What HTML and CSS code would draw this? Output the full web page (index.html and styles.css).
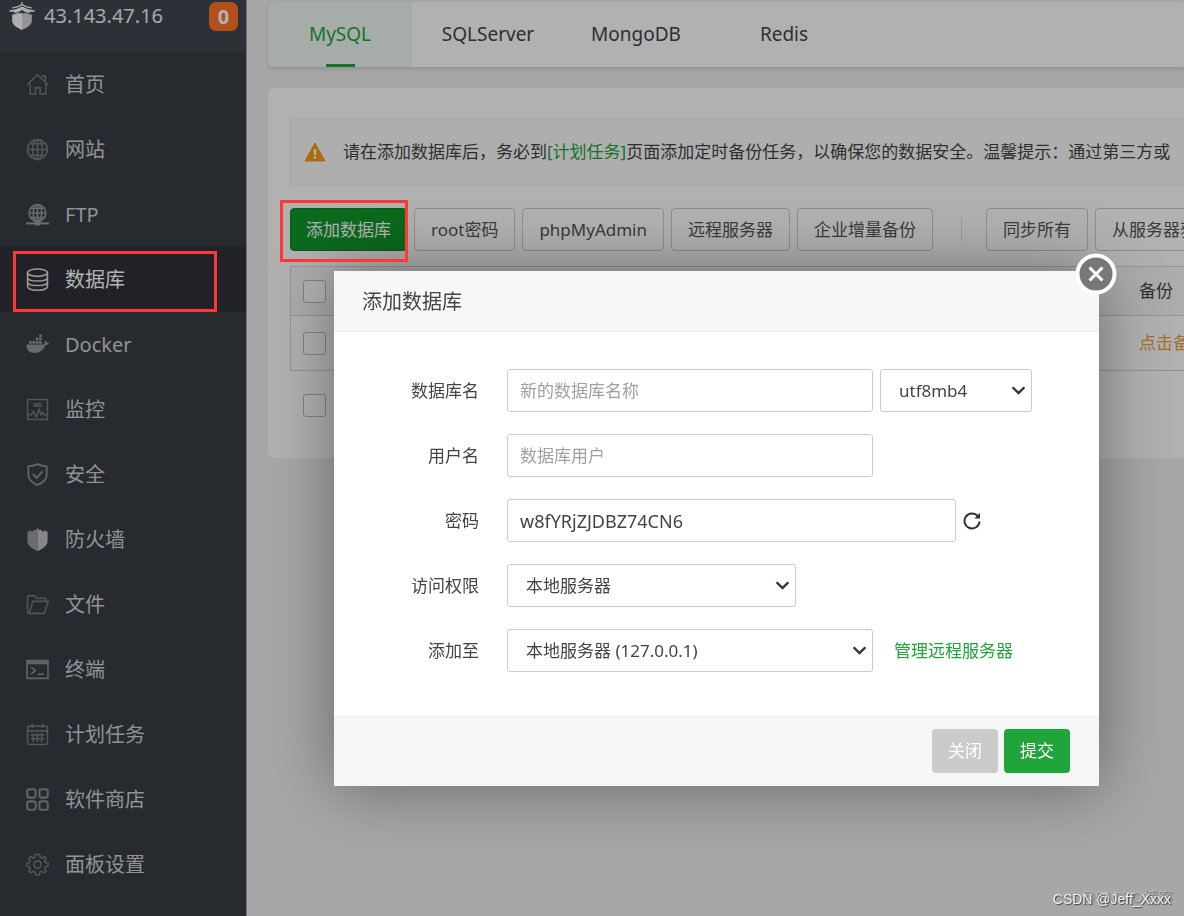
FILE: index.html
```html
<!DOCTYPE html>
<html lang="zh-CN">
<head>
<meta charset="utf-8">
<meta name="viewport" content="width=device-width, initial-scale=1">
<title>数据库</title>
<link rel="stylesheet" href="styles.css">
</head>
<body>
<div class="app">
  <aside class="sidebar">
    <header class="host">
      <svg class="host-logo" width="26" height="28" viewBox="0 0 26 28" fill="currentColor"><path d="M12.400 0h1.200v2c2.600 1.800 5.600 2.800 9.400 3.400v1.200c-4-.4-7.300-1.500-10-3.300-2.700 1.800-6 2.900-10 3.300V5.400c3.800-.6 6.800-1.600 9.400-3.400z"/><path d="M.5 8.300C5.500 7.800 9.800 6.600 13 4.600c3.200 2 7.500 3.200 12.500 3.700v1.500h-4.300l-1 1.100c-2.800-.3-5.200-1.400-7.200-2.900-2 1.500-4.400 2.600-7.200 2.900l-1-1.100H.5z"/><path d="M3.200 12l2 1v-1.500l2 .8v-1.500l2 .6 1.800-1.200V12L13 10.600V28C7.500 25.500 3.200 22.500 3.200 19z"/><path d="M22.800 12l-2 1v-1.500l-2 .8v-1.500l-2 .6-1.800-1.200V12l-2-1.400V28c5.500-2.500 9.800-5.500 9.800-9z" opacity=".8"/></svg>
      <span class="host-ip">43.143.47.16</span>
      <span class="host-badge">0</span>
    </header>
    <nav class="menu">
      <a class="menu-item" href="#"><svg class="menu-icon" viewBox="0 0 22 22"><path d="M1 11.500 11 1.500l10 10M4 10v10h5v-6h4.500v6H19V10M15 3h3.500v5"/></svg>首页</a>
      <a class="menu-item" href="#"><svg class="menu-icon" viewBox="0 0 22 22"><circle cx="11" cy="11" r="9.500"/><ellipse cx="11" cy="11" rx="4.800" ry="9.500"/><path d="M11 1.500v19M1.500 11h19M3.500 5.500h15M3.500 16.500h15"/></svg>网站</a>
      <a class="menu-item" href="#"><svg class="menu-icon bright" viewBox="0 0 22 22"><circle cx="11" cy="9.500" r="8"/><ellipse cx="11" cy="9.500" rx="4" ry="8"/><path d="M11 1.500v16M3 9.500h16M4.500 5h13M4.500 14h13"/><path d="M0 19.500h22" stroke-width="2"/><path d="M8.500 19.500h5" stroke-width="4"/></svg>FTP</a>
      <a class="menu-item active" href="#"><svg class="menu-icon" viewBox="0 0 22 22"><ellipse cx="11" cy="4.500" rx="9.500" ry="3.500"/><path d="M1.500 4.500v13c0 5 19 5 19 0v-13M1.500 9c0 4.600 19 4.600 19 0M1.500 13.300c0 4.600 19 4.600 19 0"/></svg>数据库</a>
      <a class="menu-item" href="#"><svg class="menu-icon solid" viewBox="0 0 22 22"><path d="M.5 11h16c1 0 1.600-1 1.300-2.600l.8-1.200c.8.600 1.200 1.300 1.200 2 .8-.2 1.700 0 2.200.4-.6 1.300-1.800 1.900-3.500 1.800C16.900 16.200 13.500 19 8 19 3 19 .3 16.500.5 11zM3 7.700h2.500v2.500H3zM6.200 7.700h2.500v2.500H6.200zM9.400 7.700h2.500v2.500H9.400zM12.600 7.700h2.500v2.500h-2.500zM9.400 4.600h2.500v2.400H9.400zM12.600 4.600h2.500v2.400h-2.500zM12.600 1.500h2.500v2.400h-2.500z"/></svg>Docker</a>
      <a class="menu-item" href="#"><svg class="menu-icon" viewBox="0 0 22 22"><path d="M1.500 1.500h19v19h-19zM7 5.500h8M7 7.500h8M2 16h3l2-3 3 5 2.500-7 2 5 1.500-2 1.500 2H20"/></svg>监控</a>
      <a class="menu-item" href="#"><svg class="menu-icon medium" viewBox="0 0 22 24"><path d="M11 1.200c3 1.600 6 2.300 9.500 2.300V13c0 4.500-4 7.500-9.500 10C5.500 20.500 1.500 17.500 1.500 13V3.500C5 3.500 8 2.800 11 1.200zM6 11.500l4 4 6.500-7" stroke-width="2"/></svg>安全</a>
      <a class="menu-item" href="#"><svg class="menu-icon solid light" viewBox="0 0 22 24"><path d="M11 0v24C5 21.500.5 18 .5 14V3.500l2 .5V2.500h2V4l2-.6V2h2v.6z" opacity=".7"/><path d="M11 0v24c6-2.500 10.500-6 10.500-10V3.500l-2 .5V2.500h-2V4l-2-.6V2h-2v.6z"/></svg>防火墙</a>
      <a class="menu-item" href="#"><svg class="menu-icon" viewBox="0 0 22 22"><path d="M3 19.500C2 19.500 1.500 19 1.500 18V4c0-1 .5-1.500 1.500-1.500h5L10 5h7.500c1 0 1.500.5 1.500 1.500V8M3 19.500h14.500L21.200 8H6.500z"/></svg>文件</a>
      <a class="menu-item" href="#"><svg class="menu-icon medium" viewBox="0 0 22 22"><path d="M1 2.500h20v17H1z"/><path d="M1 4.500h20" stroke-width="3"/><path d="M5 9l4 3-4 3.500M11 15.500h6"/></svg>终端</a>
      <a class="menu-item" href="#"><svg class="menu-icon" viewBox="0 0 22 22"><rect x="1.500" y="3" width="19" height="17.500" rx="2"/><path d="M1.500 7.500h19M6 .8v4M16 .8v4M4.500 11.500h13M4.500 15h13M7 9.500v9M11 9.500v9M15 9.500v9"/></svg>计划任务</a>
      <a class="menu-item" href="#"><svg class="menu-icon medium" viewBox="0 0 22 22"><g stroke-width="2"><rect x="1.200" y="1.200" width="8" height="8" rx="2"/><rect x="12.800" y="1.200" width="8" height="8" rx="2"/><rect x="1.200" y="12.800" width="8" height="8" rx="2"/><rect x="12.800" y="12.800" width="8" height="8" rx="2"/></g></svg>软件商店</a>
      <a class="menu-item" href="#"><svg class="menu-icon" viewBox="0 0 22 22"><circle cx="11" cy="11" r="3.500"/><path d="M9 1.500h4l.6 2.600 1.700.7L17.600 3.400l1.600 1.700-1.200 2.400.7 1.600 2.300.5v3l-2.300.6-.7 1.600 1.200 2.300-1.800 1.800-2.300-1.300-1.600.7-.6 2.500H9.200l-.6-2.500-1.700-.7-2.300 1.300-1.800-1.800 1.200-2.300-.7-1.600-2.300-.6v-3l2.300-.5.7-1.600-1.200-2.400 1.700-1.700 2.300 1.400 1.700-.7z"/></svg>面板设置</a>
    </nav>
  </aside>

  <main class="main">
    <nav class="tabs">
      <a class="tab current" href="#">MySQL</a>
      <a class="tab" href="#">SQLServer</a>
      <a class="tab" href="#">MongoDB</a>
      <a class="tab" href="#">Redis</a>
    </nav>
    <section class="panel">
      <div class="notice">
        <svg class="notice-icon" width="22" height="20" viewBox="0 0 22 20"><path d="M11 1 21 19H1z" fill="#f79a13" stroke="#f79a13" stroke-linejoin="round"/><path d="M11 7v6M11 14.500v2.300" stroke="#fff" stroke-width="2.400"/></svg>
        <p class="notice-text">请在添加数据库后，务必到<a class="notice-link" href="#">[计划任务]</a>页面添加定时备份任务，以确保您的数据安全。温馨提示：通过第三方或</p>
      </div>
      <div class="toolbar">
        <button class="tool primary" type="button">添加数据库</button>
        <button class="tool" type="button">root密码</button>
        <button class="tool" type="button">phpMyAdmin</button>
        <button class="tool" type="button">远程服务器</button>
        <button class="tool" type="button">企业增量备份</button>
        <span class="divider"></span>
        <button class="tool" type="button">同步所有</button>
        <button class="tool" type="button">从服务器获取</button>
      </div>
      <table class="table">
        <thead><tr><th class="col-check"><input class="check" type="checkbox" aria-label="全选"></th><th class="col-info"></th><th class="col-backup">备份</th></tr></thead>
        <tbody><tr><td class="col-check"><input class="check" type="checkbox" aria-label="选择"></td><td class="col-info"></td><td class="col-backup"><a class="backup-link" href="#">点击备份</a></td></tr></tbody>
      </table>
      <div class="batch"><input class="check" type="checkbox" aria-label="批量选择"></div>
    </section>
  </main>
</div>

<div class="shade"></div>

<form class="dialog" role="dialog" aria-labelledby="dialog-title">
  <button class="dialog-close" type="button" aria-label="关闭窗口"><svg width="42" height="42" viewBox="0 0 42 42"><circle cx="21" cy="21" r="18.500" fill="#787878" stroke="#fff" stroke-width="4"/><path d="M14.500 14.500l13 13M27.500 14.500l-13 13" stroke="#fff" stroke-width="3"/></svg></button>
  <h2 class="dialog-title" id="dialog-title">添加数据库</h2>
  <div class="dialog-body">
    <div class="row">
      <label class="label" for="db-name">数据库名</label>
      <input class="field medium-field" id="db-name" type="text" placeholder="新的数据库名称">
      <span class="select charset"><select class="field" aria-label="字符集"><option>utf8mb4</option></select><svg class="arrow" viewBox="0 0 14 10"><path d="M1.500 2 7 7.500 12.500 2"/></svg></span>
    </div>
    <div class="row">
      <label class="label" for="db-user">用户名</label>
      <input class="field medium-field" id="db-user" type="text" placeholder="数据库用户">
    </div>
    <div class="row">
      <label class="label" for="db-pass">密码</label>
      <input class="field long-field" id="db-pass" type="text" value="w8fYRjZJDBZ74CN6">
      <button class="refresh" type="button" aria-label="随机密码"><svg width="18" height="18" viewBox="0 0 18 18"><path d="M14.800 4.200A7.500 7.500 0 1 0 16.500 9.500" fill="none" stroke="#333" stroke-width="2"/><path d="M17 .8v5.700h-5.700z" fill="#333"/></svg></button>
    </div>
    <div class="row">
      <label class="label" for="db-access">访问权限</label>
      <span class="select access"><select class="field" id="db-access"><option>本地服务器</option></select><svg class="arrow" viewBox="0 0 14 10"><path d="M1.500 2 7 7.500 12.500 2"/></svg></span>
    </div>
    <div class="row">
      <label class="label" for="db-server">添加至</label>
      <span class="select medium-field"><select class="field" id="db-server"><option>本地服务器 (127.0.0.1)</option></select><svg class="arrow" viewBox="0 0 14 10"><path d="M1.500 2 7 7.500 12.500 2"/></svg></span>
      <a class="manage" href="#">管理远程服务器</a>
    </div>
  </div>
  <footer class="dialog-footer">
    <button class="action cancel" type="button">关闭</button>
    <button class="action submit" type="submit">提交</button>
  </footer>
</form>

<div class="mark mark-menu"></div>
<div class="mark mark-add"></div>
<span class="watermark site">@51CTO博客</span>
<span class="watermark author">CSDN @Jeff_Xxxx</span>
</body>
</html>
```
FILE: styles.css
```css
* { box-sizing: border-box; }

body {
  margin: 0;
  min-height: 100vh;
  overflow: hidden;
  background: #f0f0f0;
  color: #444;
  font-family: "Noto Sans", "Noto Sans CJK SC", sans-serif;
  font-size: 17px;
  line-height: 24px;
}

a { color: inherit; text-decoration: none; }
button, input, select { font: inherit; color: inherit; margin: 0; }

.app { display: flex; min-height: 100vh; }

/* sidebar */
.sidebar {
  flex: none;
  width: 247px;
  background: #383e46;
  border-right: 1px solid #a5a7aa;
  color: #d0d1d3;
  font-size: 20px;
}
.host {
  display: flex;
  align-items: flex-start;
  height: 52px;
  padding: 2px 8px 0 9px;
  background: #40464f;
}
.host-logo { color: #fafafa; }
.host-ip { margin-left: 9px; line-height: 28px; color: #f0f0f0; }
.host-badge {
  width: 29px;
  margin-left: auto;
  border-radius: 7px;
  background: #ff7128;
  color: #fff;
  font-weight: 700;
  line-height: 29px;
  text-align: center;
}
.menu-item {
  display: flex;
  align-items: center;
  gap: 16px;
  height: 65px;
  padding-left: 26px;
}
.menu-item.active { background: #2e3238; color: #fff; }
.menu-icon {
  width: 23px;
  height: 23px;
  fill: none;
  stroke: #747a80;
  stroke-width: 1.5;
}
.menu-icon.medium { stroke: #8b8f93; }
.menu-icon.bright { stroke: #979a9d; }
.menu-icon.solid { fill: #95989b; stroke: none; }
.menu-icon.light { fill: #c0c2c4; }
.active .menu-icon { stroke: #e0e0e0; }

/* content */
.main { flex: 1; min-width: 0; padding: 2px 0 0 21px; }
.tabs {
  display: flex;
  gap: 4px;
  height: 65px;
  border-radius: 6px 0 0 6px;
  overflow: hidden;
  background: #fefefe;
  box-shadow: 0 2px 5px rgba(0, 0, 0, .15);
  font-size: 19px;
}
.tab {
  position: relative;
  width: 144px;
  line-height: 64px;
  text-align: center;
}
.tab.current { background: #eef7f1; color: #20a53a; }
.tab.current::after {
  content: "";
  position: absolute;
  left: 58px;
  bottom: 0;
  width: 29px;
  height: 3px;
  background: #20a53a;
}
.panel {
  height: 370px;
  margin-top: 21px;
  padding: 30px 0 0 22px;
  border-radius: 6px 0 0 6px;
  background: #fefefe;
}
.notice {
  display: flex;
  align-items: center;
  height: 68px;
  padding-left: 13px;
  border: 1px solid #efefef;
  border-right: 0;
  border-radius: 3px 0 0 3px;
  background: #fafafa;
  overflow: hidden;
  white-space: nowrap;
}
.notice-icon { flex: none; margin-right: 17px; }
.notice-text { margin: 0; }
.notice-link { color: #20a53a; }
.toolbar {
  display: flex;
  gap: 7px;
  margin-top: 22px;
  overflow: hidden;
}
.tool {
  flex: none;
  height: 43px;
  padding: 0 16px;
  border: 1px solid #ccc;
  border-radius: 4px;
  background: #fff;
  color: #555;
  white-space: nowrap;
}
.tool.primary { padding: 0 15px; border-color: #0f8527; background: #10992a; color: #fff; }
.divider {
  flex: none;
  width: 1px;
  height: 24px;
  margin: 9px 17px 0 21px;
  background: #ddd;
}
.table {
  width: 100%;
  margin-top: 15px;
  border-collapse: collapse;
  border: 1px solid #d5d5d5;
  border-right: 0;
  table-layout: fixed;
}
.table th { height: 49px; background: #f6f6f6; font-weight: 400; }
.table td { height: 55px; border-top: 1px solid #d5d5d5; }
.table th, .table td { padding: 0; text-align: left; white-space: nowrap; overflow: hidden; }
.table .col-check { width: 44px; padding-left: 12px; }
.table .col-backup { width: 45px; }
.backup-link { color: #f0a040; }
.check {
  display: block;
  width: 23px;
  height: 23px;
  appearance: none;
  border: 1px solid #bbb;
  border-radius: 3px;
  background: #fff;
}
.batch { padding: 23px 0 0 13px; }

.shade { position: fixed; inset: 0; background: rgba(0, 0, 0, .3); }

/* dialog */
.dialog {
  position: absolute;
  top: 271px;
  left: 334px;
  width: 765px;
  background: #fff;
  box-shadow: 1px 1px 62px rgba(0, 0, 0, .4);
}
.dialog-close {
  position: absolute;
  top: -18px;
  right: -18px;
  padding: 0;
  border: 0;
  background: none;
}
.dialog-close svg { display: block; }
.dialog-title {
  margin: 0;
  padding: 2px 0 0 28px;
  border-bottom: 1px solid #eee;
  background: #f7f7f7;
  font-size: 20px;
  font-weight: 400;
  line-height: 58px;
}
.dialog-body {
  display: flex;
  flex-direction: column;
  gap: 22px;
  padding: 37px 28px 44px 0;
}
.row { display: flex; align-items: center; height: 43px; }
.label { width: 145px; margin-right: 28px; text-align: right; }
.field {
  height: 43px;
  padding: 0 12px;
  border: 1px solid #ccc;
  border-radius: 3px;
  background: #fff;
  outline: none;
}
.field::placeholder { color: #a0a0a0; opacity: 1; }
.medium-field { width: 366px; }
.long-field { width: 449px; font-size: 18px; }
.select { position: relative; display: block; }
.select .field { width: 100%; padding: 0 30px 0 18px; appearance: none; }
.charset { width: 152px; margin-left: 7px; }
.access { width: 289px; }
.arrow {
  position: absolute;
  top: 16px;
  right: 6px;
  width: 15px;
  height: 11px;
  fill: none;
  stroke: #333;
  stroke-width: 2.2;
  pointer-events: none;
}
.refresh { margin-left: 7px; padding: 0; border: 0; background: none; }
.refresh svg { display: block; }
.manage { margin-left: 21px; color: #20a53a; }
.dialog-footer {
  display: flex;
  justify-content: flex-end;
  gap: 6px;
  padding: 12px 29px 13px;
  border-top: 1px solid #edf0ef;
  background: #f5f7f6;
}
.action {
  height: 44px;
  padding: 0 16px;
  border: 0;
  border-radius: 4px;
  color: #fff;
}
.cancel { background: #cbcbcb; }
.submit { background: #20a53a; }

/* callouts and watermarks over the page */
.mark { position: absolute; border: 3px solid #ff3737; pointer-events: none; }
.mark-menu { top: 251px; left: 13px; width: 204px; height: 61px; }
.mark-add { top: 200px; left: 280px; width: 128px; height: 62px; }
.watermark {
  position: absolute;
  font-family: "Liberation Sans", "Noto Sans CJK SC", sans-serif;
  white-space: nowrap;
}
.site { right: 11px; bottom: 7px; color: rgba(255, 255, 255, .25); font-size: 15px; text-shadow: 1px 1px 1px rgba(0, 0, 0, .3); }
.author { right: 13px; bottom: 5px; color: #eee; font-size: 14px; text-shadow: 1px 1px 1px #444; }
```
